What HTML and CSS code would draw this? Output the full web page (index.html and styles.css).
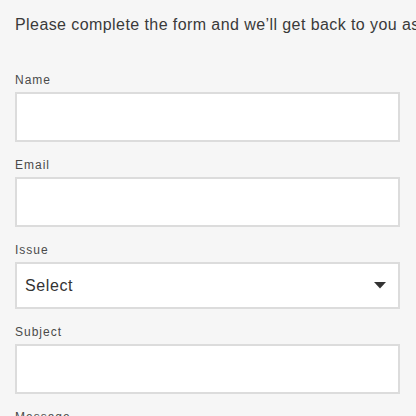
FILE: index.html
```html
<!DOCTYPE html>
<html lang="en">
<head>
<meta charset="utf-8">
<title>Contact form</title>
<link rel="stylesheet" href="styles.css">
</head>
<body>
<main class="page">
  <p class="intro">Please complete the form and we’ll get back to you as soon as possible.</p>
  <form class="form">
    <div class="field">
      <label class="label" for="name">Name</label>
      <input class="input" id="name" type="text">
    </div>
    <div class="field">
      <label class="label" for="email">Email</label>
      <input class="input" id="email" type="email">
    </div>
    <div class="field">
      <label class="label" for="issue">Issue</label>
      <div class="select">
        <span class="select-text">Select</span>
        <svg class="caret" width="12" height="7" viewBox="0 0 12 7"><path d="M0 0 H12 L6 6.5 Z" fill="#333"/></svg>
      </div>
    </div>
    <div class="field">
      <label class="label" for="subject">Subject</label>
      <input class="input" id="subject" type="text">
    </div>
    <div class="field">
      <label class="label" for="message">Message</label>
      <textarea class="input area" id="message"></textarea>
    </div>
  </form>
</main>
</body>
</html>
```
FILE: styles.css
```css
html, body {
  margin: 0;
  padding: 0;
  background: #f6f6f6;
  overflow: hidden;
}
.page {
  padding: 15px 16px 0 15px;
  font-family: "Liberation Sans", Arial, sans-serif;
  color: #333;
}
.intro {
  margin: 0 -16px 37px 0;
  font-size: 16px;
  line-height: 20px;
  letter-spacing: 0.42px;
  white-space: nowrap;
  overflow: hidden;
  color: #3a3a3a;
}
.form {
  display: flex;
  flex-direction: column;
  gap: 15px;
}
.field {
  display: flex;
  flex-direction: column;
  gap: 4px;
}
.label {
  font-size: 12px;
  line-height: 16px;
  letter-spacing: 1px;
  color: #4a4a4a;
}
.input {
  box-sizing: border-box;
  height: 50px;
  width: 100%;
  margin: 0;
  border: 2px solid #dcdcdc;
  border-radius: 0;
  background: #fff;
  font: inherit;
  outline: none;
}
.area {
  height: 120px;
  resize: none;
}
.select {
  box-sizing: border-box;
  height: 47px;
  border: 2px solid #dcdcdc;
  background: #fff;
  display: flex;
  align-items: center;
  justify-content: space-between;
  padding: 0 12px 0 8px;
}
.select-text {
  font-size: 16px;
  letter-spacing: 0.6px;
  color: #333;
}
.caret {
  display: block;
}
```
